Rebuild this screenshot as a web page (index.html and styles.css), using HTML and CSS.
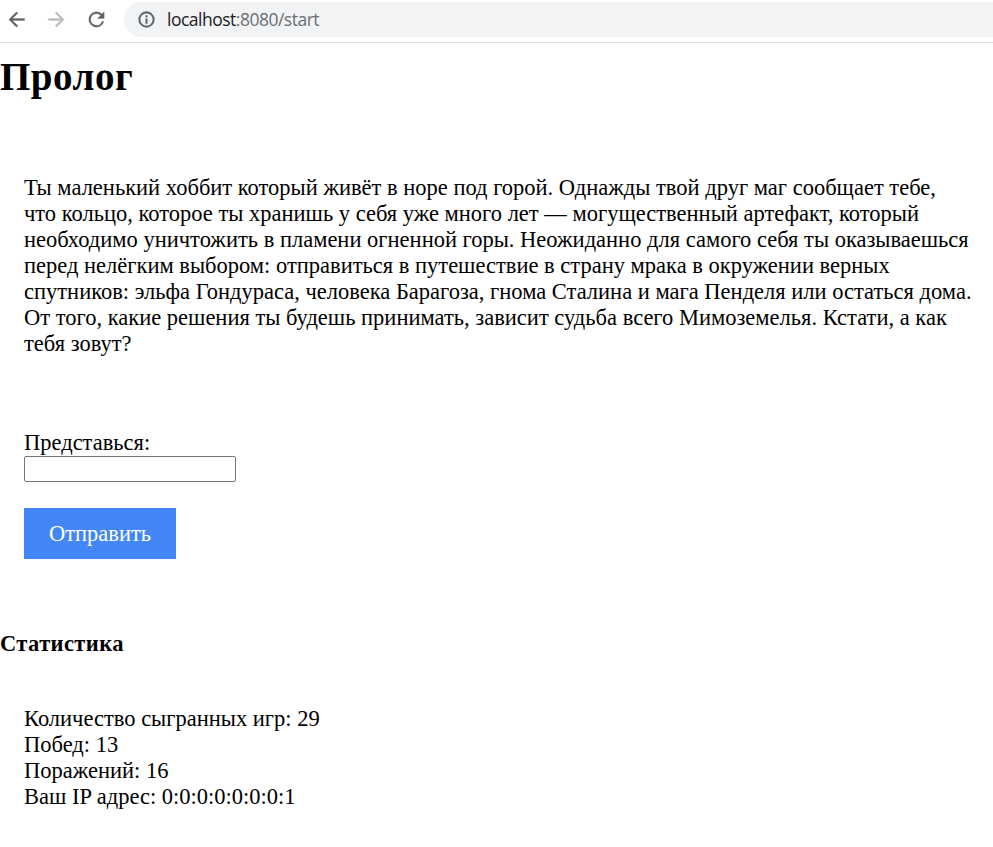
FILE: index.html
```html
<!DOCTYPE html>
<html lang="ru">
<head>
<meta charset="utf-8">
<title>Пролог</title>
<link rel="stylesheet" href="styles.css">
</head>
<body>
<header class="toolbar">
  <svg class="nav" viewBox="0 0 24 24"><path d="M20.4 11H7.8l5.6-5.6L12 4l-8 8 8 8 1.4-1.4L7.8 13h12.6z"/></svg>
  <svg class="nav nav-off" viewBox="0 0 24 24"><path d="M3.6 11h12.6l-5.6-5.6L12 4l8 8-8 8-1.4-1.4 5.6-5.6H3.6z"/></svg>
  <svg class="nav" viewBox="0 0 24 24"><path d="M17.65 6.35A8 8 0 1 0 19.73 14h-2.08A6 6 0 1 1 12 6c1.66 0 3.14.69 4.22 1.78L13 11h7V4z"/></svg>
  <div class="address">
    <svg class="info" viewBox="0 0 24 24"><path d="M11 7h2v2h-2zm0 4h2v6h-2zm1-9a10 10 0 1 0 0 20 10 10 0 0 0 0-20zm0 18a8 8 0 1 1 0-16 8 8 0 0 1 0 16z"/></svg>
    <span class="url"><span class="host">localhost</span>:8080/start</span>
  </div>
</header>
<main>
  <h1>Пролог</h1>
  <p class="story">Ты маленький хоббит который живёт в норе под горой. Однажды твой друг маг сообщает тебе,<br>что кольцо, которое ты хранишь у себя уже много лет — могущественный артефакт, который<br>необходимо уничтожить в пламени огненной горы. Неожиданно для самого себя ты оказываешься<br>перед нелёгким выбором: отправиться в путешествие в страну мрака в окружении верных<br>спутников: эльфа Гондураса, человека Барагоза, гнома Сталина и мага Пенделя или остаться дома.<br>От того, какие решения ты будешь принимать, зависит судьба всего Мимоземелья. Кстати, а как<br>тебя зовут?</p>
  <form class="form">
    <label for="name">Представься:</label>
    <input id="name" type="text">
    <button type="button">Отправить</button>
  </form>
  <h2>Статистика</h2>
  <p class="stats">Количество сыгранных игр: 29<br>Побед: 13<br>Поражений: 16<br>Ваш IP адрес: 0:0:0:0:0:0:0:1</p>
</main>
</body>
</html>
```
FILE: styles.css
```css
* { box-sizing: border-box; }
body {
  margin: 0;
  background: #fff;
  color: #000;
  font: 22.5px/26px "Liberation Serif", serif;
}
.toolbar {
  display: flex;
  align-items: center;
  height: 43px;
  padding: 0 0 4px 5px;
  border-bottom: 1px solid #dadce0;
}
.nav {
  width: 23px;
  height: 23px;
  margin-right: 17px;
  fill: #5f6368;
  stroke: #5f6368;
  stroke-width: 0.3;
}
.nav-off { fill: #babcbe; stroke: #babcbe; }
.address {
  flex: 1;
  display: flex;
  align-items: center;
  gap: 11px;
  height: 35px;
  margin-left: -1px;
  padding-left: 13px;
  border-radius: 18px 0 0 18px;
  background: #f1f3f4;
}
.info {
  width: 19px;
  height: 19px;
  fill: #5f6368;
  stroke: #5f6368;
  stroke-width: 0.5;
}
.url {
  color: #6b6f73;
  font: 17.5px/24px "Open Sans", sans-serif;
  letter-spacing: -0.5px;
}
.host { color: #202124; }
h1 {
  margin: 11px 0 0;
  font-size: 39px;
  line-height: 46px;
  letter-spacing: 0.5px;
}
.story { margin: 75px 0 0 24px; white-space: nowrap; }
.form {
  display: flex;
  flex-direction: column;
  align-items: flex-start;
  margin: 73px 0 0 24px;
}
.form input {
  width: 212px;
  height: 26px;
  margin: 0;
  padding: 1px 3px;
  border: 1px solid #767676;
  border-radius: 2px;
  font: 17px "Liberation Sans", sans-serif;
}
.form button {
  width: 152px;
  height: 51px;
  margin-top: 26px;
  padding: 0;
  border: 0;
  background: #4287f5;
  color: #fff;
  font: inherit;
}
h2 {
  margin: 72px 0 0;
  font-size: 22.5px;
  line-height: 26px;
  letter-spacing: 0.4px;
}
.stats { margin: 49px 0 0 24px; }
```
